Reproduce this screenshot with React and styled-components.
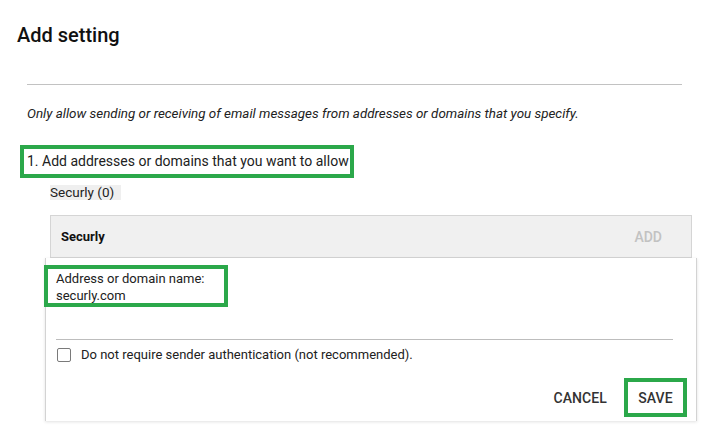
import React from "react";
import styled, { createGlobalStyle } from "styled-components";

const Global = createGlobalStyle`
  html, body { margin: 0; padding: 0; background: #fff; }
  body { font-family: Roboto, "Liberation Sans", Arial, sans-serif; color: #212121; }
  * { box-sizing: border-box; }
`;

const GREEN = "#2ba84a";

const Page = styled.div`
  width: 701px;
  height: 428px;
  overflow: hidden;
  padding-top: 23px;
  display: flex;
  flex-direction: column;
  align-items: flex-start;
`;

const Title = styled.h2`
  margin: 0 0 0 17px;
  font-size: 20px;
  line-height: 24px;
  font-weight: 500;
  color: #111;
`;

const Rule = styled.div`
  margin: 37px 0 0 27px;
  width: 655px;
  height: 1px;
  background: #c2c2c2;
`;

const Intro = styled.p`
  margin: 20px 0 0 27px;
  font-size: 13.4px;
  line-height: 17px;
  font-style: italic;
  color: #222;
`;

const Highlight = styled.div`
  border: 4px solid ${GREEN};
  width: ${(p) => p.$w}px;
  height: ${(p) => p.$h}px;
  padding-left: ${(p) => p.$pl}px;
  margin-left: ${(p) => p.$ml}px;
  margin-top: ${(p) => p.$mt}px;
  flex-shrink: 0;
`;

const StepText = styled.div`
  font-size: 14px;
  line-height: 25px;
  white-space: nowrap;
  color: #212121;
`;

const Chip = styled.div`
  margin: 7px 0 0 50px;
  height: 15px;
  width: 71px;
  background: #efefef;
  font-size: 13.5px;
  line-height: 15px;
  color: #222;
  white-space: nowrap;
`;

const Header = styled.div`
  margin: 15px 0 0 50px;
  width: 642px;
  height: 43px;
  background: #f0f0f0;
  border: 1px solid #d5d5d5;
  display: flex;
  align-items: center;
  justify-content: space-between;
  padding: 0 29px 0 10px;
`;

const HeaderName = styled.span`
  font-size: 13px;
  font-weight: 700;
  color: #111;
`;

const AddButton = styled.span`
  font-size: 14px;
  font-weight: 500;
  color: #c2c2c2;
`;

const Card = styled.div`
  margin-left: 45px;
  width: 652px;
  flex: 1;
  background: #fff;
  border-left: 1px solid #d3d3d3;
  border-right: 1px solid #d3d3d3;
  box-shadow: 0 1px 3px rgba(0, 0, 0, 0.12);
  display: flex;
  flex-direction: column;
  align-items: flex-start;
  margin-bottom: 7px;
`;

const FieldText = styled.div`
  font-size: 13px;
  line-height: 17px;
  padding-top: 1px;
  white-space: nowrap;
  color: #212121;
`;

const Divider = styled.div`
  margin: 32px 0 0 10px;
  width: 617px;
  height: 1px;
  background: #bdbdbd;
`;

const CheckRow = styled.label`
  margin: 7px 0 0 11px;
  display: flex;
  align-items: center;
  gap: 10px;
  font-size: 13px;
  line-height: 16px;
  color: #212121;
`;

const Box = styled.span`
  width: 14px;
  height: 14px;
  border: 1.5px solid #7a7a7a;
  border-radius: 2px;
  background: #fff;
`;

const Actions = styled.div`
  align-self: stretch;
  margin: 15px 9px 0 0;
  display: flex;
  justify-content: flex-end;
  align-items: center;
  gap: 17px;
`;

const ActionText = styled.span`
  font-size: 14px;
  font-weight: 500;
  color: #333;
  letter-spacing: 0.1px;
`;

const SaveBox = styled.div`
  width: 63px;
  height: 39px;
  border: 4px solid ${GREEN};
  display: flex;
  align-items: center;
  justify-content: center;
`;

export default function App() {
  return (
    <>
      <Global />
      <Page>
        <Title>Add setting</Title>
        <Rule />
        <Intro>
          Only allow sending or receiving of email messages from addresses or domains that you specify.
        </Intro>
        <Highlight $w={334} $h={33} $pl={3} $ml={20} $mt={23}>
          <StepText>1. Add addresses or domains that you want to allow</StepText>
        </Highlight>
        <Chip>Securly (0)</Chip>
        <Header>
          <HeaderName>Securly</HeaderName>
          <AddButton>ADD</AddButton>
        </Header>
        <Card>
          <Highlight $w={184} $h={42} $pl={8} $ml={-2} $mt={7}>
            <FieldText>
              Address or domain name:
              <br />
              securly.com
            </FieldText>
          </Highlight>
          <Divider />
          <CheckRow>
            <Box />
            Do not require sender authentication (not recommended).
          </CheckRow>
          <Actions>
            <ActionText>CANCEL</ActionText>
            <SaveBox>
              <ActionText>SAVE</ActionText>
            </SaveBox>
          </Actions>
        </Card>
      </Page>
    </>
  );
}
